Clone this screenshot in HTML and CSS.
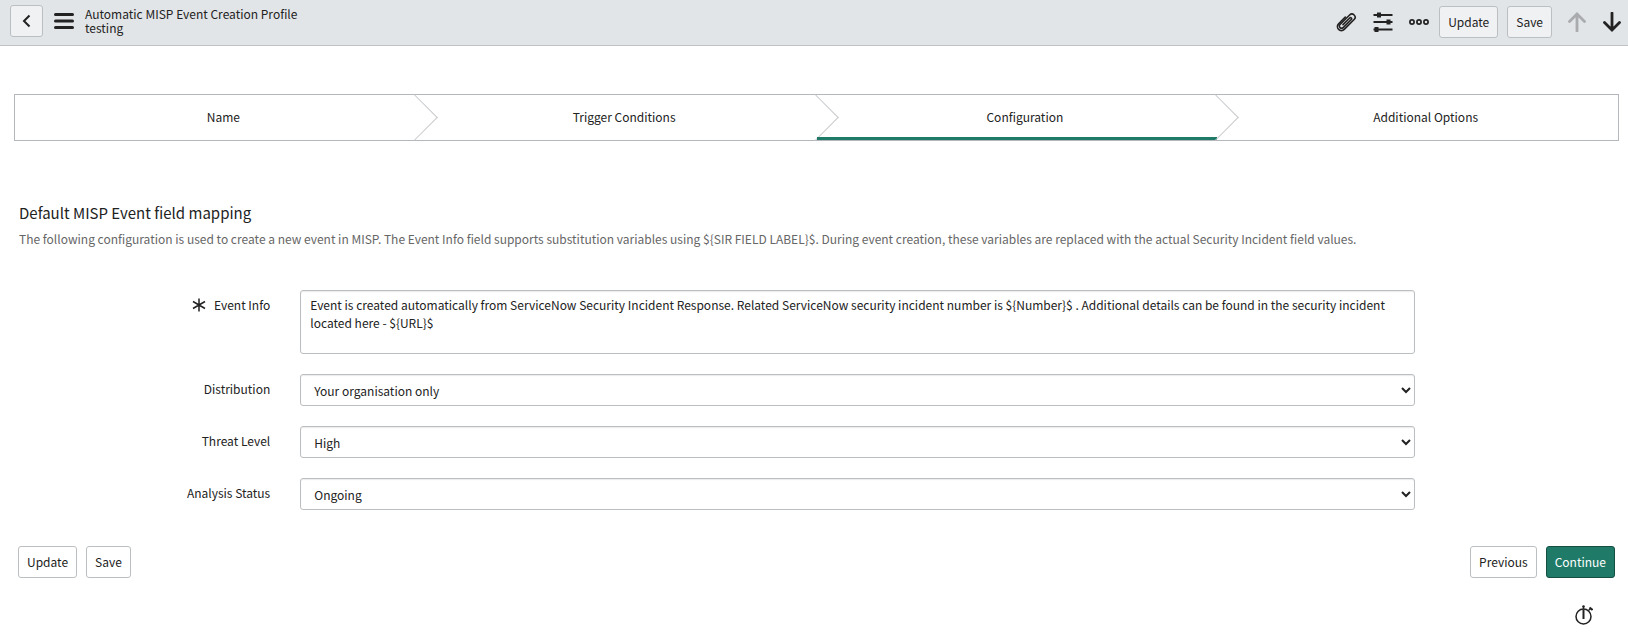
FILE: index.html
```html
<!DOCTYPE html>
<html lang="en">
<head>
  <meta charset="UTF-8">
  <meta name="viewport" content="width=device-width, initial-scale=1.0">
  <title>testing | Automatic MISP Event Creation Profile</title>
  <link rel="stylesheet" href="styles.css">
</head>
<body>
  <header class="navbar">
    <button type="button" class="btn btn-back" aria-label="Back">
      <svg width="10" height="14" viewBox="0 0 10 14"><path d="M7.5 1.5 2 7l5.5 5.5" fill="none" stroke="currentColor" stroke-width="2"/></svg>
    </button>
    <button type="button" class="btn-icon menu" aria-label="Menu">
      <svg width="20" height="16" viewBox="0 0 20 16"><path d="M1.5 1.5h17M1.5 8h17M1.5 14.5h17" stroke="currentColor" stroke-width="3" stroke-linecap="round"/></svg>
    </button>
    <h1 class="navbar__title">Automatic MISP Event Creation Profile<span>testing</span></h1>

    <div class="navbar__actions">
      <button type="button" class="btn-icon" aria-label="Attachments">
        <svg width="22" height="22" viewBox="0 0 22 22"><g transform="rotate(45 11 11)" fill="none" stroke="currentColor" stroke-width="1.6" stroke-linecap="round"><path d="M7 8v9.500a4 4 0 0 0 8 0V3.500a3.200 3.200 0 0 0-6.400 0v13.500a2.200 2.200 0 0 0 4.400 0V5.500a1.100 1.100 0 0 0-2.200 0V15"/></g></svg>
      </button>
      <button type="button" class="btn-icon" aria-label="Personalize form">
        <svg width="20" height="20" viewBox="0 0 20 20"><path d="M.5 3h19M.5 10h19M.5 17.5h19" stroke="currentColor" stroke-width="1.8"/><path d="M4 .5h4v5H4zM13.5 7.5h4v5h-4zM1.5 15h4v5h-4z" fill="currentColor"/></svg>
      </button>
      <button type="button" class="btn-icon" aria-label="More options">
        <svg width="20" height="6" viewBox="0 0 20 6"><g fill="none" stroke="currentColor" stroke-width="1.7"><circle cx="3" cy="3" r="2.1"/><circle cx="10" cy="3" r="2.1"/><circle cx="17" cy="3" r="2.1"/></g></svg>
      </button>
      <div class="btn-group">
        <button type="button" class="btn">Update</button>
        <button type="button" class="btn">Save</button>
      </div>
      <div class="record-nav">
        <button type="button" class="btn-icon" aria-label="Previous record" disabled>
          <svg width="18" height="20" viewBox="0 0 18 20"><path d="M9 19V2M1.5 9.5 9 2l7.500 7.500" fill="none" stroke="currentColor" stroke-width="2.8" stroke-linecap="round"/></svg>
        </button>
        <button type="button" class="btn-icon" aria-label="Next record">
          <svg width="18" height="20" viewBox="0 0 18 20"><path d="M9 1v17M1.5 10.5 9 18l7.500-7.500" fill="none" stroke="currentColor" stroke-width="2.8" stroke-linecap="round"/></svg>
        </button>
      </div>
    </div>
  </header>

  <main>
    <ol class="wizard">
      <li class="wizard__step">Name</li>
      <li class="wizard__step">Trigger Conditions</li>
      <li class="wizard__step active" aria-current="step">Configuration</li>
      <li class="wizard__step">Additional Options</li>
    </ol>

    <section class="intro">
      <h2>Default MISP Event field mapping</h2>
      <p>The following configuration is used to create a new event in MISP. The Event Info field supports substitution variables using ${SIR FIELD LABEL}$. During event creation, these variables are replaced with the actual Security Incident field values.</p>
    </section>

    <form class="form">
      <div class="form__row">
        <label for="event_info">
          <svg class="required" width="14" height="14" viewBox="0 0 14 14"><path d="M7 .5v13M1 3.5l12 7M13 3.5l-12 7" stroke="currentColor" stroke-width="1.5"/></svg>
          Event Info
        </label>
        <textarea id="event_info" class="form-control" required>Event is created automatically from ServiceNow Security Incident Response. Related ServiceNow security incident number is ${Number}$ . Additional details can be found in the security incident located here - ${URL}$</textarea>
      </div>
      <div class="form__row">
        <label for="distribution">Distribution</label>
        <select id="distribution" class="form-control"><option>Your organisation only</option></select>
      </div>
      <div class="form__row">
        <label for="threat_level">Threat Level</label>
        <select id="threat_level" class="form-control"><option>High</option></select>
      </div>
      <div class="form__row">
        <label for="analysis_status">Analysis Status</label>
        <select id="analysis_status" class="form-control"><option>Ongoing</option></select>
      </div>

      <div class="form__buttons">
        <div class="btn-group">
          <button type="button" class="btn btn-default">Update</button>
          <button type="button" class="btn btn-default">Save</button>
        </div>
        <div class="btn-group">
          <button type="button" class="btn btn-default">Previous</button>
          <button type="button" class="btn btn-primary">Continue</button>
        </div>
      </div>
    </form>
  </main>

  <footer class="footer">
    <button type="button" class="btn-icon" aria-label="Response time">
      <svg width="18" height="20" viewBox="0 0 18 20"><circle cx="8.5" cy="11.5" r="7.5" fill="none" stroke="currentColor" stroke-width="1.5"/><path d="M8.5 5v9" stroke="currentColor" stroke-width="2"/><path d="M8.5 1.5v3M13.5 5.5l2-2" stroke="currentColor" stroke-width="1.3"/><circle cx="8.5" cy="1.5" r="1.3" fill="currentColor"/><path d="m14.5 2.5 3 2.5" stroke="currentColor" stroke-width="2"/></svg>
    </button>
  </footer>
</body>
</html>
```
FILE: styles.css
```css
:root {
  --text: #222;
  --border: #bcbfc1;
  --wizard-border: #b4b7bb;
  --green: #1f7a68;
}
* { box-sizing: border-box; }
body {
  margin: 0;
  color: var(--text);
  background: #fff;
  font-family: "Noto Sans CJK SC", "Open Sans", sans-serif;
  font-size: 12px;
  line-height: 18px;
}
button, select, textarea {
  font: inherit;
  color: inherit;
}
svg { display: block; }

/* header */
.navbar {
  display: flex;
  align-items: center;
  height: 46px;
  padding: 0 7px 3px 10px;
  background: #e2e5e8;
  border-bottom: 1px solid #bfc2c5;
}
.navbar__title {
  margin: 0 0 0 11px;
  font-size: 12px;
  font-weight: 400;
  line-height: 14px;
}
.navbar__title span { display: block; }
.navbar__actions {
  display: flex;
  align-items: center;
  gap: 16px;
  margin-left: auto;
  padding-top: 2px;
}
.navbar__actions > .btn-group { margin-left: -6px; }
.record-nav {
  display: flex;
  gap: 17px;
}

.btn {
  height: 32px;
  padding: 0 8px;
  background: #f0f1f3;
  border: 1px solid var(--border);
  border-radius: 3px;
}
.btn-back {
  display: flex;
  align-items: center;
  justify-content: center;
  width: 33px;
  margin-right: 11px;
  padding: 0;
}
.btn-default { background: #fff; }
.btn-primary {
  color: #fff;
  background: var(--green);
  border-color: #144f43;
}
.btn-group {
  display: flex;
  gap: 9px;
}
.btn-icon {
  padding: 0;
  background: none;
  border: 0;
}
.btn-icon:disabled { color: #a9abad; }

/* wizard steps */
.wizard {
  display: flex;
  margin: 48px 9px 0 14px;
  padding: 0;
  list-style: none;
  border: 1px solid var(--wizard-border);
}
.wizard__step {
  position: relative;
  flex: 1 1 0;
  height: 45px;
  padding-left: 16px;
  line-height: 44px;
  text-align: center;
}
.wizard__step.active { box-shadow: inset 0 -3px var(--green); }
.wizard__step:not(:last-child)::after {
  content: "";
  position: absolute;
  top: 6px;
  right: -15px;
  width: 32px;
  height: 32px;
  border: solid #c6c8ca;
  border-width: 1px 1px 0 0;
  transform: rotate(45deg);
}

.intro { padding: 61px 19px 0; }
.intro h2 {
  margin: 0;
  font-size: 15px;
  font-weight: 400;
  line-height: 22px;
}
.intro p {
  margin: 6px 0 0;
  color: #666;
}

/* form */
.form { padding-top: 42px; }
.form__row {
  display: grid;
  grid-template-columns: 16.6% 68.5%;
  column-gap: 30px;
  margin-bottom: 20px;
}
.form__row label {
  display: flex;
  justify-content: flex-end;
  gap: 8px;
  padding-top: 6px;
}
.required { margin-top: 2px; }
.form-control {
  width: 100%;
  height: 32px;
  padding: 0 9px;
  background: #fff;
  border: 1px solid var(--border);
  border-radius: 3px;
  box-shadow: inset 0 1px 1px rgba(0, 0, 0, 0.08);
}
select.form-control { padding-right: 0; }
textarea.form-control {
  height: 64px;
  padding-top: 5px;
  resize: none;
}
.form__buttons {
  display: flex;
  justify-content: space-between;
  padding: 16px 13px 0 18px;
}

.footer {
  display: flex;
  justify-content: flex-end;
  padding: 27px 35px 0;
}
```
